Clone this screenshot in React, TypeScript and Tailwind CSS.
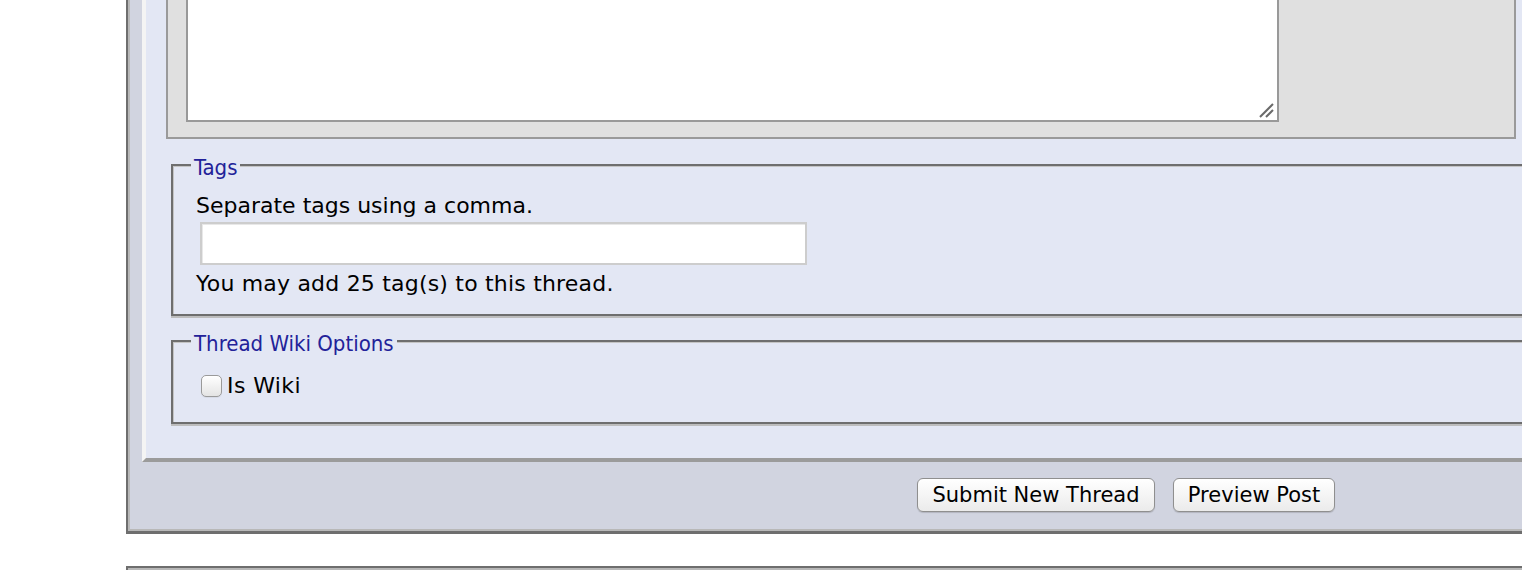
import React from "react";

const body = { fontFamily: '"DejaVu Sans", Verdana, sans-serif' };
const legendFont = { fontFamily: '"DejaVu Sans Condensed", "DejaVu Sans", Tahoma, sans-serif' };

function Fieldset({ legend, children, className }: { legend: string; children: React.ReactNode; className?: string }) {
  return (
    <fieldset
      className={`ml-[5px] min-w-0 border-2 border-[#6e6e6e] pl-[18px] pr-4 shadow-[inset_1px_1px_0_#c4c4c4,0_2px_0_#bdbdbd] ${className ?? ""}`}
    >
      <legend
        className="bg-[#e3e7f4] px-[3px] pt-[6px] text-[22px] leading-[26px] text-[#222299]"
        style={legendFont}
      >
        {legend}
      </legend>
      {children}
    </fieldset>
  );
}

export default function App() {
  return (
    <div className="h-[570px] w-full overflow-hidden bg-white text-black" style={body}>
      {/* Outer panel */}
      <div className="ml-[126px] w-[1500px] border-b-[3px] border-l-2 border-[#6e6e6e]">
        <div className="border-b-2 border-l-2 border-[#b8b8b8] bg-[#d1d4e0] pl-3">
          {/* Inner panel */}
          <div className="border-b-4 border-l-4 border-b-[#9b9b9b] border-l-[#f4f4f4] bg-[#e3e7f4] pb-[34px] pl-5">
            {/* Editor box */}
            <div className="w-[1350px] border-x-2 border-b-2 border-[#9a9a9a] bg-[#e0e0e0] pb-[15px] pl-[18px]">
              <div className="relative w-[1093px]">
                <textarea
                  className="block h-[122px] w-[1093px] resize-none border-x-2 border-b-2 border-t-0 border-[#999999] bg-white outline-none"
                  defaultValue=""
                />
                <svg
                  className="pointer-events-none absolute bottom-[4px] right-[5px]"
                  width="16"
                  height="16"
                  viewBox="0 0 16 16"
                >
                  <line x1="2" y1="15" x2="15" y2="2" stroke="#6a6a6a" strokeWidth="2" />
                  <line x1="8" y1="15" x2="15" y2="8" stroke="#6a6a6a" strokeWidth="2" />
                </svg>
              </div>
            </div>

            {/* Tags */}
            <Fieldset legend="Tags" className="mt-[10px] pb-[17px] pt-[12px]">
              <div className="pl-[5px] text-[22px] leading-[26px]">
                <div>Separate tags using a comma.</div>
                <input
                  type="text"
                  className="ml-[4px] mt-[3px] block h-[43px] w-[607px] border-2 border-[#cdcdcd] bg-white shadow-[inset_1px_1px_0_#e8e8e8] outline-none"
                />
                <div className="mt-[6px] tracking-[0.2px]">You may add 25 tag(s) to this thread.</div>
              </div>
            </Fieldset>

            {/* Wiki */}
            <Fieldset legend="Thread Wiki Options" className="mt-[9px] pb-[23px] pt-[16px]">
              <label className="flex items-center pl-[10px] text-[22px] leading-[26px]">
                <span className="mr-[5px] block h-[22px] w-[21px] rounded-[5px] border border-[#9a9a9a] bg-gradient-to-b from-white to-[#e4e4e4] shadow-[inset_0_1px_1px_rgba(255,255,255,0.9),0_1px_0_rgba(0,0,0,0.05)]" />
                <span className="tracking-[0.4px]">Is Wiki</span>
              </label>
            </Fieldset>
          </div>

          {/* Buttons */}
          <div className="flex gap-[18px] pb-[17px] pl-[775px] pt-4">
            <button className="h-[34px] w-[238px] rounded-[6px] border border-[#8f8f8f] bg-gradient-to-b from-white to-[#ebebeb] text-[21px] leading-none text-black shadow-[0_1px_1px_rgba(0,0,0,0.15)]">
              Submit New Thread
            </button>
            <button className="h-[34px] w-[162px] rounded-[6px] border border-[#8f8f8f] bg-gradient-to-b from-white to-[#ebebeb] text-[21px] leading-none text-black shadow-[0_1px_1px_rgba(0,0,0,0.15)]">
              Preview Post
            </button>
          </div>
        </div>
      </div>

      {/* Next panel */}
      <div className="ml-[126px] mt-[32px] w-[1500px] border-l-2 border-t-2 border-[#6e6e6e]">
        <div className="h-[40px] border-l-2 border-t-2 border-[#b8b8b8] bg-[#d1d4e0]" />
      </div>
    </div>
  );
}
